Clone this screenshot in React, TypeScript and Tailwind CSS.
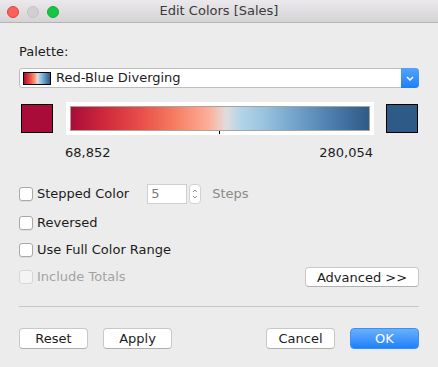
import React from "react";

const font = { fontFamily: '"DejaVu Sans", "Liberation Sans", sans-serif' };

const Checkbox = ({ label, disabled }: { label: string; disabled?: boolean }) => (
  <label className="flex items-center gap-[4px]">
    <span
      className={
        disabled
          ? "h-[14px] w-[14px] rounded-[3px] border border-[#d6d6d6] bg-[#f4f4f4]"
          : "h-[14px] w-[14px] rounded-[3px] border border-[#a9a9a9] bg-white shadow-[0_1px_0_rgba(0,0,0,0.06)]"
      }
    />
    <span className={disabled ? "text-[#a3a3a3]" : "text-[#1c1c1c]"}>{label}</span>
  </label>
);

const Button = ({ children, primary }: { children: React.ReactNode; primary?: boolean }) => (
  <button
    className={
      primary
        ? "h-[21px] w-[69px] rounded-[4px] border border-[#3b8ff5] bg-gradient-to-b from-[#68b0fb] to-[#1b80fb] text-[13px] leading-none text-white"
        : "h-[21px] w-[69px] rounded-[4px] border border-[#c8c8c8] border-b-[#b0b0b0] bg-white text-[13px] leading-none text-[#1c1c1c]"
    }
  >
    {children}
  </button>
);

const ramp =
  "linear-gradient(to right, #a90c38 0%, #d02c3c 12%, #e9504b 24%, #f47a5e 34%, #fb9c84 42%, #fbb3a0 47%, #e2dcdc 52%, #b2d4e8 57%, #9cc5e0 64%, #74a4cb 75%, #4e7fad 87%, #2e5a87 100%)";

export default function App() {
  return (
    <div style={font} className="flex h-[367px] w-[438px] flex-col bg-[#ececec] text-[13px] text-[#1c1c1c]">
      {/* title bar */}
      <div className="relative flex h-[23px] items-center justify-center border-b border-[#b4b4b4] bg-gradient-to-b from-[#ebe9eb] to-[#d5d3d5]">
        <div className="absolute left-[7px] top-[6px] flex gap-[8px]">
          <span className="h-[12px] w-[12px] rounded-full border border-[#e24138] bg-[#fc605c]" />
          <span className="h-[12px] w-[12px] rounded-full border border-[#c4c4c4] bg-[#d0d0d0]" />
          <span className="h-[12px] w-[12px] rounded-full border border-[#14ae3a] bg-[#15c643]" />
        </div>
        <span className="text-[13px] text-[#3a3a3a]">Edit Colors [Sales]</span>
      </div>

      <div className="flex flex-1 flex-col px-[19px]">
        <div className="mt-[21px] leading-[16px]">Palette:</div>

        {/* palette select */}
        <div className="mt-[8px] flex h-[20px] items-center rounded-[3px] border border-[#bdbdbd] bg-white">
          <div className="ml-[3px] h-[13px] w-[28px] border border-black" style={{ background: ramp }} />
          <span className="ml-[5px]">Red-Blue Diverging</span>
          <div className="ml-auto flex h-[20px] w-[18px] items-center justify-center rounded-r-[4px] bg-gradient-to-b from-[#52a3fb] to-[#1a7ffa] -mr-px">
            <svg width="8" height="5" viewBox="0 0 8 5">
              <path d="M1 1 L4 4 L7 1" fill="none" stroke="white" strokeWidth="1.5" />
            </svg>
          </div>
        </div>

        {/* color range */}
        <div className="mt-[14px] flex items-center">
          <div className="ml-[2px] h-[29px] w-[32px] border border-black bg-[#a90c38]" />
          <div className="relative ml-[13px] h-[33px] w-[308px] bg-white p-[4px]">
            <div className="h-full w-full border border-[#a7a39d]" style={{ background: ramp }} />
            <span className="absolute left-[153px] top-[29px] h-[3px] w-px bg-black" />
          </div>
          <div className="ml-[12px] h-[29px] w-[32px] border border-black bg-[#2e5a87]" />
        </div>
        <div className="ml-[46px] mt-[10px] flex w-[308px] justify-between leading-[16px]">
          <span>68,852</span>
          <span>280,054</span>
        </div>

        {/* options */}
        <div className="mt-[23px] flex h-[20px] items-center">
          <Checkbox label="Stepped Color" />
          <div className="ml-[18px] flex h-[20px] w-[40px] items-center border border-[#cfcfcf] bg-white pl-[3px] text-[#7a7a7a]">5</div>
          <div className="ml-[2px] flex h-[20px] w-[12px] flex-col items-center justify-center rounded-[4px] border border-[#d2d2d2] bg-white">
            <svg width="6" height="12" viewBox="0 0 6 12">
              <path d="M1 4 L3 2 L5 4 M1 8 L3 10 L5 8" fill="none" stroke="#9a9a9a" strokeWidth="1" />
            </svg>
          </div>
          <span className="ml-[11px] text-[#8a8a8a]">Steps</span>
        </div>
        <div className="mt-[9px] flex h-[20px] items-center">
          <Checkbox label="Reversed" />
        </div>
        <div className="mt-[7px] flex h-[20px] items-center">
          <Checkbox label="Use Full Color Range" />
        </div>
        <div className="mt-[7px] flex h-[20px] items-center justify-between">
          <Checkbox label="Include Totals" disabled />
          <button className="h-[20px] w-[114px] rounded-[4px] border border-[#c8c8c8] border-b-[#b0b0b0] bg-white text-[13px] leading-none">
            Advanced &gt;&gt;
          </button>
        </div>

        <div className="mt-[19px] h-px bg-[#c7c7c7]" />

        <div className="mt-[21px] flex items-center">
          <Button>Reset</Button>
          <div className="ml-[15px]">
            <Button>Apply</Button>
          </div>
          <div className="ml-auto">
            <Button>Cancel</Button>
          </div>
          <div className="ml-[15px]">
            <Button primary>OK</Button>
          </div>
        </div>
      </div>
    </div>
  );
}
